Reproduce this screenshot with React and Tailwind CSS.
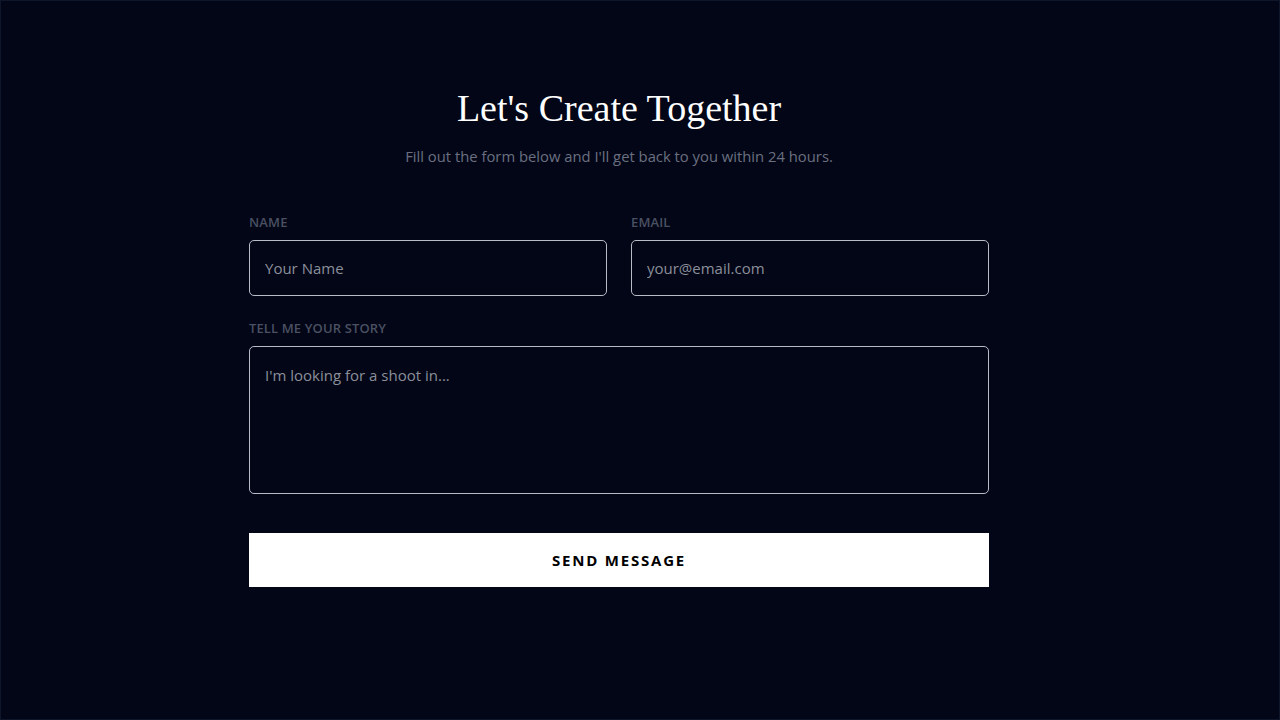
export default function App() {
  const label = "block text-[13px] leading-5 font-semibold uppercase tracking-[0.01em] text-[#4a5061] mb-2";
  const field =
    "w-full bg-transparent border border-[#b9bcc7] rounded-[5px] px-[15px] text-[15px] text-white placeholder:text-[#8b8f9a] outline-none";

  return (
    <div
      className="min-h-[720px] w-full bg-[#020617] shadow-[inset_0_0_0_1px_#10162a] flex justify-center pr-[42px]"
      style={{ fontFamily: '"Open Sans", "Noto Sans", sans-serif' }}
    >
      <div className="w-[740px] pt-[86px]">
        {/* Heading */}
        <h1
          className="text-center text-[38px] leading-[45px] text-white"
          style={{ fontFamily: '"Liberation Serif", "DejaVu Serif", serif' }}
        >
          Let's Create Together
        </h1>
        <p className="mt-[13px] text-center text-[14.8px] leading-6 text-[#6b7080]">
          Fill out the form below and I'll get back to you within 24 hours.
        </p>

        <form className="mt-[44px]" onSubmit={(e) => e.preventDefault()}>
          <div className="grid grid-cols-2 gap-6">
            <div>
              <label className={label}>Name</label>
              <input type="text" placeholder="Your Name" className={`${field} h-[56px]`} />
            </div>
            <div>
              <label className={label}>Email</label>
              <input type="email" placeholder="your@email.com" className={`${field} h-[56px]`} />
            </div>
          </div>

          <div className="mt-[22px]">
            <label className={label}>Tell me your story</label>
            <textarea
              placeholder="I'm looking for a shoot in..."
              className={`${field} h-[148px] py-[16px] leading-6 resize-none block`}
            />
          </div>

          <button
            type="submit"
            className="mt-[39px] w-full h-[54px] bg-white text-black text-[15px] font-bold uppercase tracking-[0.12em]"
          >
            Send Message
          </button>
        </form>
      </div>
    </div>
  );
}
